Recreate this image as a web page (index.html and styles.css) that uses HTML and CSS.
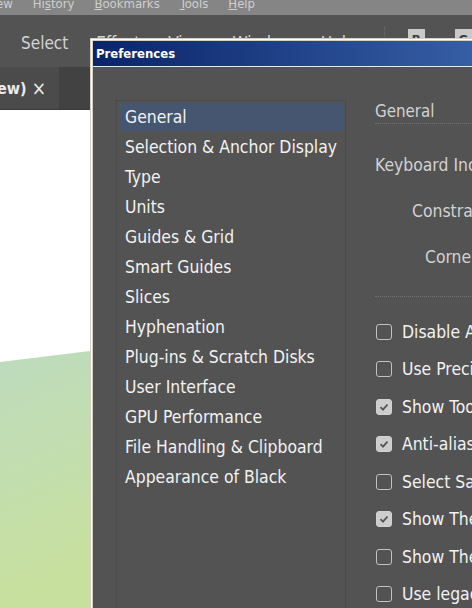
FILE: index.html
```html
<!DOCTYPE html>
<html>
<head>
<meta charset="utf-8">
<link rel="stylesheet" href="styles.css">
</head>
<body>
<div class="app">
  <div class="menubar">
    <div class="menu-items">
      <span class="menu-cut">ew</span>
      <span>Hi<u>s</u>tory</span>
      <span><u>B</u>ookmarks</span>
      <span><u>T</u>ools</span>
      <span><u>H</u>elp</span>
    </div>
  </div>
  <div class="toolbar">
    <span class="tb-item first">Select</span>
    <span class="tb-item">Effect</span>
    <span class="tb-item">View</span>
    <span class="tb-item">Window</span>
    <span class="tb-item">Help</span>
    <span class="tb-sep"></span>
    <span class="tb-btn">B</span>
    <span class="tb-btn second">G</span>
  </div>
  <div class="tabbar">
    <div class="tab"><span class="tab-name">ew)</span><span class="tab-close">×</span></div>
    <div class="tab-rest"></div>
  </div>
  <div class="canvas">
    <svg class="artwork" viewBox="0 0 90 498" preserveAspectRatio="none">
      <defs>
        <linearGradient id="g" x1="0" y1="0" x2="0.15" y2="1">
          <stop offset="0" stop-color="#bddbbe"/>
          <stop offset="1" stop-color="#c8e09d"/>
        </linearGradient>
      </defs>
      <polygon points="0,252 90,241 90,498 0,498" fill="url(#g)"/>
    </svg>
  </div>
</div>

<div class="dialog">
  <div class="dialog-frame">
    <div class="titlebar">Preferences</div>
    <div class="dialog-body">
      <div class="listbox">
        <div class="item selected">General</div>
        <div class="item">Selection &amp; Anchor Display</div>
        <div class="item">Type</div>
        <div class="item">Units</div>
        <div class="item">Guides &amp; Grid</div>
        <div class="item">Smart Guides</div>
        <div class="item">Slices</div>
        <div class="item">Hyphenation</div>
        <div class="item">Plug-ins &amp; Scratch Disks</div>
        <div class="item">User Interface</div>
        <div class="item">GPU Performance</div>
        <div class="item">File Handling &amp; Clipboard</div>
        <div class="item">Appearance of Black</div>
      </div>
      <div class="panel">
        <div class="panel-head">General</div>
        <div class="fields">
          <div class="field">Keyboard Increment:</div>
          <div class="field indent1">Constrain Angle:</div>
          <div class="field indent2">Corner Radius:</div>
        </div>
        <div class="checks">
          <div class="check"><span class="box"></span><span>Disable Auto Add/Delete</span></div>
          <div class="check"><span class="box"></span><span>Use Precise Cursors</span></div>
          <div class="check"><span class="box on"><svg viewBox="0 0 16 16"><path d="M4 8.2 L6.8 11 L12 5.2" fill="none" stroke="#555" stroke-width="2"/></svg></span><span>Show Tool Tips</span></div>
          <div class="check"><span class="box on"><svg viewBox="0 0 16 16"><path d="M4 8.2 L6.8 11 L12 5.2" fill="none" stroke="#555" stroke-width="2"/></svg></span><span>Anti-aliased Artwork</span></div>
          <div class="check"><span class="box"></span><span>Select Same Tint %</span></div>
          <div class="check"><span class="box on"><svg viewBox="0 0 16 16"><path d="M4 8.2 L6.8 11 L12 5.2" fill="none" stroke="#555" stroke-width="2"/></svg></span><span>Show The Home Screen</span></div>
          <div class="check"><span class="box"></span><span>Show The Legacy New File</span></div>
          <div class="check"><span class="box"></span><span>Use legacy "File New"</span></div>
        </div>
      </div>
    </div>
  </div>
</div>
</body>
</html>
```

FILE: styles.css
```css
html, body {
  margin: 0;
  padding: 0;
}
body {
  width: 472px;
  height: 608px;
  overflow: hidden;
  position: relative;
  background: #535353;
  font-family: "DejaVu Sans Condensed", "DejaVu Sans", sans-serif;
  font-stretch: condensed;
}
.app {
  display: flex;
  flex-direction: column;
  height: 608px;
}
.menubar {
  height: 15px;
  background: #858585;
  overflow: hidden;
  flex: none;
}
.menu-items {
  display: flex;
  gap: 20px;
  margin-top: -5px;
  font-size: 13px;
  line-height: 17px;
  color: #cfcfcf;
}
.menu-cut {
  margin-left: -4px;
}
.menu-items u {
  text-decoration: underline;
}
.toolbar {
  height: 52px;
  flex: none;
  display: flex;
  align-items: flex-start;
  background: #535353;
  color: #d4d4d4;
  font-size: 17px;
  line-height: 20px;
}
.tb-item {
  margin-top: 18px;
  margin-left: 28px;
}
.tb-item.first {
  margin-left: 21px;
}
.tb-sep {
  margin-left: 28px;
  margin-top: 12px;
  width: 0;
  height: 14px;
  border-left: 1px dotted #6c6c6c;
}
.tb-btn {
  margin-top: 14px;
  margin-left: 23px;
  width: 25px;
  height: 22px;
  background: #c9c9c9;
  color: #3a3a3a;
  font-size: 13px;
  font-weight: bold;
  text-align: center;
  line-height: 22px;
}
.tb-btn.second {
  margin-left: 30px;
}
.tabbar {
  height: 43px;
  flex: none;
  display: flex;
  border-bottom: 1px solid #3a3a3a;
  box-sizing: border-box;
}
.tab {
  width: 59px;
  background: #4b4b4b;
  display: flex;
  align-items: center;
  gap: 5px;
  color: #ececec;
  font-size: 16px;
  font-weight: bold;
  overflow: hidden;
}
.tab-name {
  margin-left: -3px;
}
.tab-close {
  font-weight: normal;
  font-size: 19px;
}
.tab-rest {
  flex: 1;
  background: #424242;
}
.canvas {
  flex: 1;
  background: #ffffff;
  position: relative;
}
.artwork {
  position: absolute;
  left: 0;
  top: 0;
  display: block;
  width: 90px;
  height: 100%;
}

/* Dialog window */
.dialog {
  position: absolute;
  left: 90px;
  top: 38px;
  width: 420px;
  height: 600px;
  border-top: 1px solid #d4d0c8;
  border-left: 1px solid #d4d0c8;
  background: #d4d0c8;
}
.dialog-frame {
  border-top: 1px solid #ffffff;
  border-left: 1px solid #ffffff;
  padding: 1px 0 0 1px;
  height: 100%;
  box-sizing: border-box;
  display: flex;
  flex-direction: column;
}
.titlebar {
  height: 25px;
  flex: none;
  background: linear-gradient(to right, #0a246a, #3a64aa);
  color: #ffffff;
  font-weight: bold;
  font-size: 13px;
  line-height: 25px;
  padding-left: 3px;
  border-bottom: 1px solid #e8e8e8;
}
.dialog-body {
  flex: 1;
  background: #535353;
  display: flex;
  align-items: flex-start;
}
.listbox {
  margin-top: 33px;
  margin-left: 23px;
  width: 230px;
  height: 560px;
  box-sizing: border-box;
  border: 1px dotted #444444;
  padding: 2px;
  display: flex;
  flex-direction: column;
  gap: 2px;
  flex: none;
}
.item {
  height: 28px;
  line-height: 29px;
  padding-left: 6px;
  color: #f2f2f2;
  font-size: 17.4px;
  white-space: nowrap;
}
.item.selected {
  background: #475670;
}
.panel {
  margin-left: 29px;
  margin-top: 33px;
  flex: 1;
  min-width: 0;
}
.panel-head {
  height: 23px;
  line-height: 23px;
  font-size: 16.8px;
  color: #d2d2d2;
  border-bottom: 1px dotted #707070;
  white-space: nowrap;
}
.fields {
  padding-top: 26px;
  padding-bottom: 24px;
  display: flex;
  flex-direction: column;
  gap: 16px;
  border-bottom: 1px dotted #707070;
}
.field {
  height: 30px;
  line-height: 30px;
  font-size: 17.4px;
  color: #d2d2d2;
  white-space: nowrap;
}
.field.indent1 {
  padding-left: 37px;
}
.field.indent2 {
  padding-left: 50px;
}
.checks {
  padding-top: 16px;
}
.check {
  height: 37.5px;
  display: flex;
  align-items: center;
  gap: 10px;
  padding-left: 1px;
  color: #f2f2f2;
  font-size: 17.4px;
  white-space: nowrap;
}
.box {
  width: 16px;
  height: 16px;
  box-sizing: border-box;
  border: 1px solid #c2c2c2;
  border-radius: 3px;
  flex: none;
  display: flex;
}
.box.on {
  background: #cdcdcd;
  border-color: #d2d2d2;
}
.box svg {
  width: 14px;
  height: 14px;
}
```
